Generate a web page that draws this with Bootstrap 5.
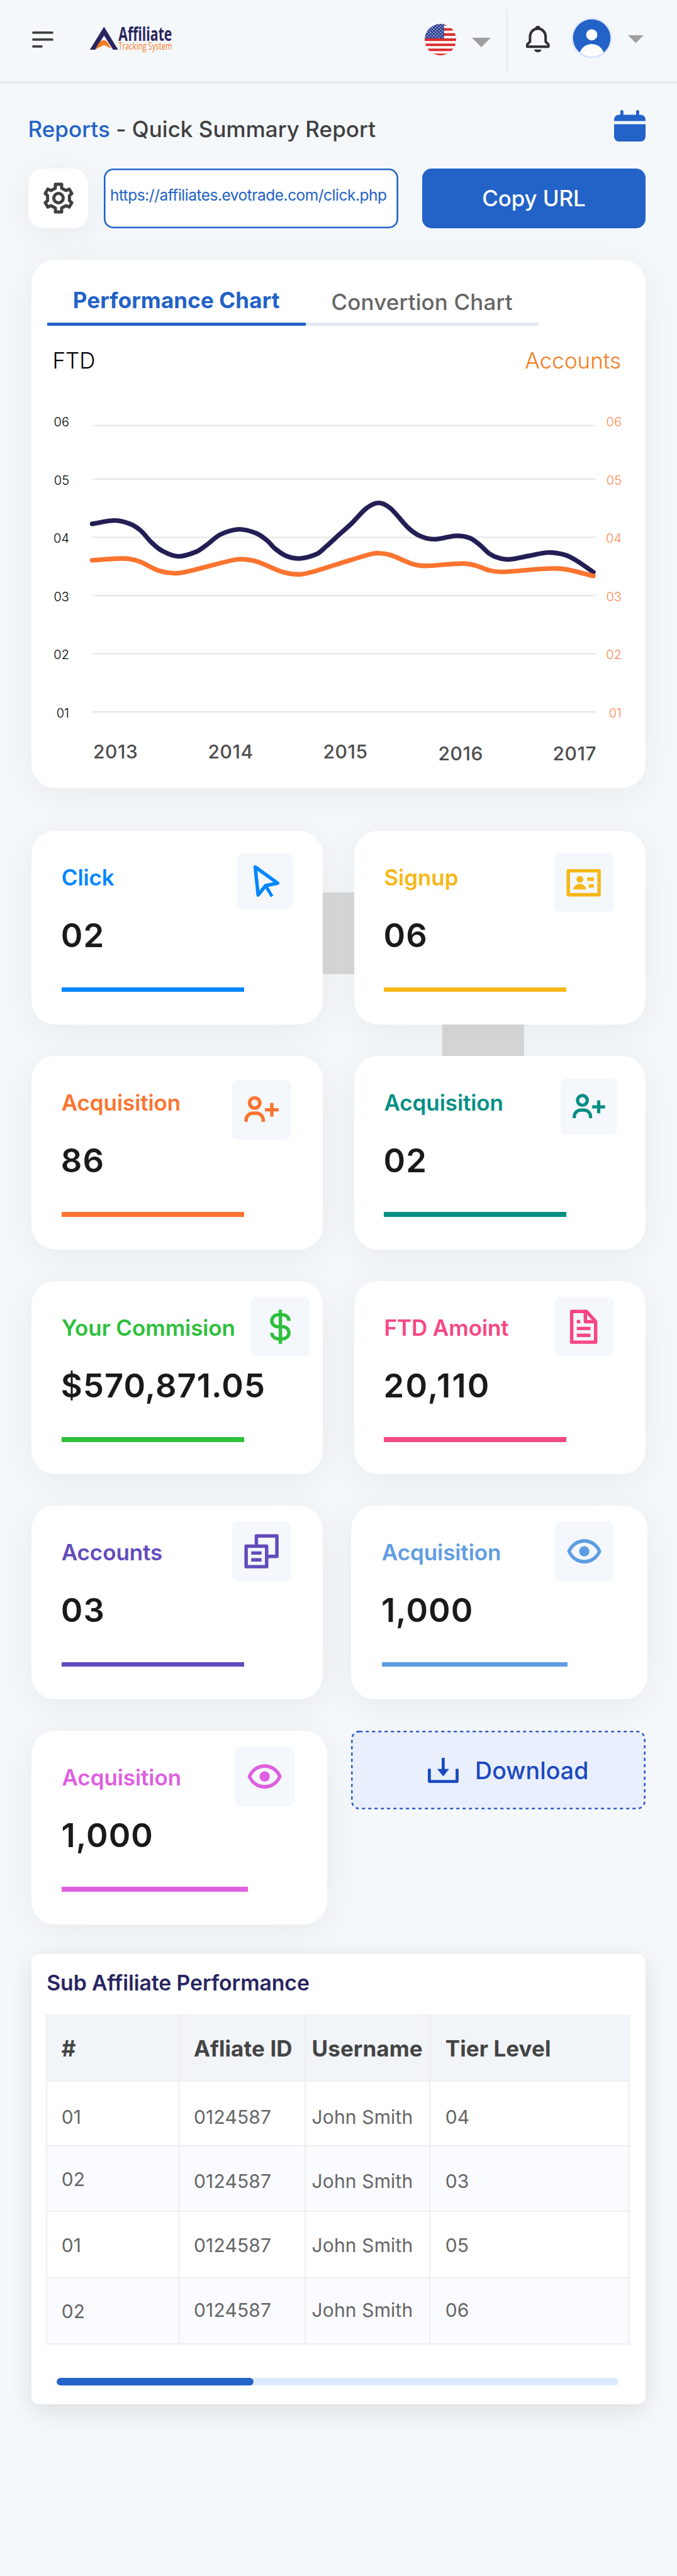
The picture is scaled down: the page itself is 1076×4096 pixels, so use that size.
<!DOCTYPE html>
<html lang="en">
<head>
<meta charset="utf-8">
<meta name="viewport" content="width=device-width, initial-scale=1">
<title>Quick Summary Report</title>
<link rel="stylesheet" href="https://cdn.jsdelivr.net/npm/bootstrap@5.3.0/dist/css/bootstrap.min.css">
<style>
  :root { --brand: #2362c7; --ink: #404040; }
  body { width: 1076px; min-height: 4096px; background: #f4f8fb; color: var(--ink); font-family: Inter, "Liberation Sans", sans-serif; font-size: 35px; line-height: 40px; overflow-x: hidden; }
  svg { display: block; flex: none; }

  .topbar { height: 130px; padding: 0 53px 5px 51px; box-shadow: 0 2.5px 0 #e6e6e6; }
  .brand-mark { margin-left: 57px; }
  .caret-lg { margin: 10px 25px 0 25px; }
  .split-line { width: 2.6px; height: 98px; background: #e6e6e6; margin: 2px 28.5px 0 0; }
  .avatar-pic { margin: -5px 25.5px 0 34px; }

  .page-head { padding: 45px 50px 0 44.5px; height: 137.7px; }
  .page-head h1 { font-size: 35px; line-height: 50px; font-weight: 500; margin: 5px 0 0; letter-spacing: .03px; }
  .page-head a { color: var(--brand); text-decoration: none; }

  .link-bar { height: 95px; padding: 0 50px 0 45px; }
  .gear-btn { width: 95px; height: 95px; border-radius: 24px; background: #fff; border: 0; padding: 0; box-shadow: 0 10px 60px rgba(0,0,0,.06); }
  .url-box { width: 467.6px; height: 95px; margin-left: 25.4px; border: 0; border-radius: 15px; background: #fff; box-shadow: inset 0 0 0 2.6px var(--brand); color: var(--brand); font-size: 24.5px; font-weight: 400; letter-spacing: -.5px; padding: 0 4px 10px 9.5px; }
  .url-box:focus { color: var(--brand); box-shadow: inset 0 0 0 2.6px var(--brand); }
  .copy-btn { width: 355.2px; height: 95px; border: 0; border-radius: 15px; background: var(--brand); color: #fff; font-size: 35px; font-weight: 500; letter-spacing: -.15px; }

  .panel { background: #fff; border: 0; border-radius: 37.5px; box-shadow: 0 10px 60px rgba(0,0,0,.06); color: inherit; }
  .chart-panel { width: 976px; height: 840.7px; margin: 50px 0 0 50px; }
  .chart-tabs { height: 105.3px; padding-left: 25px; }
  .chart-tabs .nav-link { padding: 44.8px 0 0; border-radius: 0; font-weight: 500; letter-spacing: .12px; color: #666; box-shadow: inset 0 -5px #e4e8f3; width: 370.2px; padding-top: 47.8px; }
  .chart-tabs .nav-link.active { width: 410.5px; padding-top: 44.8px; font-weight: 700; color: var(--brand); box-shadow: inset 0 -5px var(--brand); }
  .axis-names { padding: 34.8px 39px 0 33.5px; height: 122px; font-weight: 300; color: #000; }
  .axis-names .right-axis { color: #f47c20; }
  .grid-line line { stroke: #e8e8e8; stroke-width: 2.4; }
  .y-text { font-size: 20px; font-weight: 300; text-anchor: end; }
  .x-text { font-size: 30px; font-weight: 500; fill: #4d4d4d; letter-spacing: .55px; }

  .stats { padding: 68px 0 0 50px; }
  .stat-row { width: 976px; height: 307.5px; margin-bottom: 50.2px; }
  .stat { width: 463.3px; height: 307.5px; padding-left: 47.5px; z-index: 1; color: var(--tone); }
  .stat.wide { width: 470.3px; padding-left: 48.3px; }
  .stat.shift { margin: 0 -2.6px 0 0; }
  .stat-top { height: 133px; }
  .stat-name { font-size: 35px; font-weight: 600; line-height: 40px; letter-spacing: -.08px; margin: 54px 0 0; padding-left: .2px; white-space: nowrap; }
  .stat-num { font-size: 52.5px; line-height: 66px; font-weight: 600; color: #1a1a1a; letter-spacing: 1px; margin-left: -.7px; }
  .stat-line { width: 290px; height: 7.5px; background: var(--tone); margin-top: 49.3px; }
  .wide .stat-line { width: 295.5px; }
  .tile { width: 95px; height: 95px; border-radius: 10px; background: #f4f7fb; margin: var(--drop, 25px) var(--edge, 50.4px) 0 auto; flex: none; }
  .tile.sm { width: 89.5px; height: 89.5px; }
  .tile .solid { fill: var(--tone); stroke: none; }
  .tile .stroked { fill: none; stroke: var(--tone); stroke-width: 2; stroke-linejoin: round; }
  .shade { position: absolute; background: #d9d9d9; z-index: 0; }
  .shade-a { left: 500px; top: 165.4px; width: 90px; height: 130px; }
  .shade-b { left: 703.4px; top: 365px; width: 130px; height: 70px; }

  .download-btn { width: 468px; height: 125px; border: 0; border-radius: 12.5px; padding: 0 0 0 122px; color: #1b49bf; font-size: 37.5px; font-weight: 500; z-index: 1; }
  .download-btn .frame { position: absolute; inset: 0; z-index: -1; }
  .download-btn .btn-text { margin-left: 26px; padding-top: 3px; letter-spacing: .1px; }

  .table-panel { width: 976px; height: 715.7px; margin: -2.6px 0 0 50px; border-radius: 12.5px; box-shadow: 0 10px 38px rgba(0,0,0,.11); padding: 26.2px 24.8px 0 22.7px; z-index: 2; }
  .table-panel h2 { font-size: 33.75px; font-weight: 600; line-height: 40px; letter-spacing: -.08px; color: #282561; margin: 0; padding: 0 0 0 1.5px; height: 69.2px; }
  .tiers { width: 928.5px; table-layout: fixed; border-collapse: collapse; margin: 0; color: #666; font-size: 30px; line-height: 30px; }
  .tiers > :not(caption) > * > * { padding: 0 0 0 23px; border: 2px solid #efefef; vertical-align: top; color: inherit; background: transparent; box-shadow: none; white-space: nowrap; }
  .tiers > thead > tr { height: 106px; background: #f1f4f8; color: #444; }
  .tiers > thead > tr > th { font-size: 35px; font-weight: 700; line-height: 40px; padding-top: 34.5px; border-top: 0; letter-spacing: .1px; }
  .tiers > tbody { letter-spacing: .15px; }
  .tiers > tbody > tr:nth-child(even) { background: #fafbff; }
  .tiers > * > tr > :nth-child(2) { padding-left: 22px; }
  .tiers > * > tr > :nth-child(3) { padding-left: 9.5px; }
  .tiers > * > tr > :nth-child(4) { padding-left: 24px; }
  .tiers > tbody > tr:nth-child(1) { height: 103px; } .tiers > tbody > tr:nth-child(1) > td { padding-top: 41px; }
  .tiers > tbody > tr:nth-child(2) { height: 104.7px; } .tiers > tbody > tr:nth-child(2) > td { padding-top: 40px; }
  .tiers > tbody > tr:nth-child(3) { height: 105.3px; } .tiers > tbody > tr:nth-child(3) > td { padding-top: 38px; }
  .tiers > tbody > tr:nth-child(4) { height: 105.5px; } .tiers > tbody > tr:nth-child(4) > td { padding-top: 35px; }
  .tiers > tbody > tr:nth-child(2) > td:first-child { padding-top: 37.5px; }
  .tiers > tbody > tr:nth-child(4) > td:first-child { padding-top: 37.5px; }
  .scroll-track { width: 893.3px; height: 12.5px; border-radius: 6.25px; background: #dde9fd; margin: 52.5px 0 0 17.3px; }
  .scroll-track .progress-bar { background: var(--brand); border-radius: 6.25px; }
</style>
<script src="https://cdn.jsdelivr.net/npm/bootstrap@5.3.0/dist/js/bootstrap.bundle.min.js"></script>
</head>
<body>

<header class="topbar d-flex align-items-center">
  <svg width="34" height="26" viewBox="0 0 34 26" fill="none" stroke="#404040" stroke-width="3.75" stroke-linecap="round"><path d="M1.9 1.9h30M1.9 12.9h30M1.9 23.9h13"/></svg>
  <svg class="brand-mark" width="133.5" height="62.8" viewBox="500 0 640 301">
    <path fill="#2a2560" d="M612 55L719 230H681L612 122L545 230H504z"/>
    <path fill="#f47c20" d="M545 229L578 173Q596 158 612 157Q628 160 634 168L667 222L612 194z"/>
    <text x="722" y="162" font-family="Open Sans" font-weight="700" font-size="147" fill="#2a2560" textLength="408" lengthAdjust="spacingAndGlyphs">Affiliate</text>
    <text x="722" y="230" font-family="Open Sans" font-weight="400" font-size="74" fill="#f47c20" textLength="408" lengthAdjust="spacingAndGlyphs">Tracking System</text>
  </svg>
  <div class="d-flex align-items-center ms-auto">
    <svg width="50" height="50" viewBox="0 0 50 50">
      <defs>
        <clipPath id="flagClip"><circle cx="25" cy="25" r="25"/></clipPath>
        <pattern id="starGrid" width="5.3" height="5" patternUnits="userSpaceOnUse"><circle cx="1.4" cy="1" r=".85" fill="#fff"/><circle cx="4" cy="3.5" r=".85" fill="#fff"/></pattern>
      </defs>
      <g clip-path="url(#flagClip)">
        <path fill="#fff" d="M0 0h50v50H0z"/>
        <path stroke="#dc2d2f" stroke-width="4.1" d="M0 .5h50M0 8.7h50M0 16.9h50M0 25.1h50M0 33.2h50M0 41.3h50M0 49.4h50"/>
        <path fill="#2f4496" d="M0 0h30.7v23.1H0z"/><path fill="url(#starGrid)" d="M0 0h30v22.5H0z"/>
      </g>
    </svg>
    <svg class="caret-lg" width="30" height="15" viewBox="0 0 30 15"><path fill="#9f9f9f" d="M0 0h30L15 15z"/></svg>
    <div class="split-line"></div>
    <svg width="37.6" height="42.1" viewBox="0 0 37.6 42.1">
      <path fill="none" stroke="#2e3035" stroke-width="4" stroke-linejoin="round" d="M2 33.3V29.6L6.4 25.3V17A12.4 12.4 0 0 1 31.2 17V25.3L35.6 29.6V33.3z"/>
      <path fill="#2e3035" d="M14.6 4a4.2 4 0 0 1 8.4 0zM13 37.8h11.6a5.8 4.3 0 0 1-11.6 0z"/>
    </svg>
    <svg class="avatar-pic" width="65" height="65" viewBox="0 0 65 65">
      <clipPath id="avatarClip"><circle cx="32.5" cy="32.5" r="29.8"/></clipPath>
      <circle cx="32.5" cy="32.5" r="32.5" fill="#e0e9ff"/><circle cx="32.5" cy="32.5" r="29.8" fill="#2362c7"/>
      <g clip-path="url(#avatarClip)" fill="#fff"><ellipse cx="32.5" cy="27.3" rx="8.9" ry="8.9"/><circle cx="32.5" cy="62" r="20"/></g>
    </svg>
    <svg width="25" height="12.5" viewBox="0 0 25 12.5"><path fill="#9f9f9f" d="M0 0h25L12.5 12.5z"/></svg>
  </div>
</header>

<section class="page-head d-flex justify-content-between align-items-start">
  <h1><a href="#">Reports</a> - Quick Summary Report</h1>
  <svg width="50" height="50" viewBox="0 0 50 50" fill="#2362c7"><path d="M9.9 8V2.4a2.45 2.45 0 0 1 4.9 0V7.5H35V2.4a2.45 2.45 0 0 1 4.9 0V7.5h2.6A7.5 7.5 0 0 1 50 15v2.5H0V15a7.5 7.5 0 0 1 7.5-7.5h2.4zM0 22.5h50v20a7.5 7.5 0 0 1-7.5 7.5h-35A7.5 7.5 0 0 1 0 42.5z"/></svg>
</section>

<section class="link-bar d-flex">
  <button class="gear-btn btn d-flex align-items-center justify-content-center" type="button" aria-label="Settings">
    <svg width="52" height="52" viewBox="-26 -26 52 52" fill="none" stroke="#404040" stroke-width="5" stroke-linejoin="round"><path d="M-5-22.1H5V-15.8L12-12L17-14.3L21.2-7.3L17.4-4V4L21.2 7.3L17 14.3L12 12L5 15.8V22.1H-5V15.8L-12 12L-17 14.3L-21.2 7.3L-17.4 4V-4L-21.2-7.3L-17-14.3L-12-12L-5-15.8z"/><circle r="7.5"/></svg>
  </button>
  <input class="url-box form-control" type="text" value="https://affiliates.evotrade.com/click.php" readonly aria-label="Tracking link">
  <button class="copy-btn btn p-0 ms-auto" type="button">Copy URL</button>
</section>

<section class="panel chart-panel card">
  <ul class="nav chart-tabs">
    <li class="nav-item d-flex"><a class="nav-link active text-center" href="#">Performance Chart</a></li>
    <li class="nav-item d-flex"><a class="nav-link text-center" href="#">Convertion Chart</a></li>
  </ul>
  <div class="axis-names d-flex justify-content-between"><span>FTD</span><span class="right-axis">Accounts</span></div>
  <svg width="976" height="600" viewBox="50 640 976 600">
    <g class="grid-line">
      <line x1="147.5" x2="946" y1="676.7" y2="676.7"/><line x1="147.5" x2="946" y1="761.8" y2="761.8"/><line x1="147.5" x2="946" y1="854.5" y2="854.5"/><line x1="147.5" x2="946" y1="947" y2="947"/><line x1="147.5" x2="946" y1="1039.4" y2="1039.4"/><line x1="147.5" x2="946" y1="1132" y2="1132"/>
    </g>
    <g class="y-text" fill="#000">
      <text x="110" y="678">06</text><text x="110" y="770.7">05</text><text x="110" y="863.2">04</text><text x="110" y="955.9">03</text><text x="110" y="1048.3">02</text><text x="110" y="1140.7">01</text>
    </g>
    <g class="y-text" fill="#fc8c56">
      <text x="988" y="678">06</text><text x="988" y="770.7">05</text><text x="988" y="863.2">04</text><text x="988" y="955.9">03</text><text x="988" y="1048.3">02</text><text x="988" y="1140.7">01</text>
    </g>
    <g class="x-text">
      <text x="148" y="1206">2013</text><text x="330.5" y="1206">2014</text><text x="513.5" y="1206">2015</text><text x="696.5" y="1208.8">2016</text><text x="878.5" y="1208.8">2017</text>
    </g>
    <g fill="none" stroke-width="7.4" stroke-linecap="round" id="series"></g>
  </svg>
</section>

<section class="stats position-relative">
  <div class="shade shade-a"></div>
  <div class="shade shade-b"></div>

  <div class="stat-row d-flex justify-content-between">
    <article class="panel stat card" style="--tone:#0086ff">
      <div class="stat-top d-flex align-items-start"><h3 class="stat-name">Click</h3>
        <div class="tile sm" style="--drop:35.4px;--edge:48.3px"><svg width="89.5" height="89.5" viewBox="0 0 89.5 89.5"><path class="stroked" style="stroke-width:5.5" d="M29.6 21.6L65.2 47.3L46.1 51.2L34.3 66z"/><path class="stroked" style="stroke-width:5" d="M46.3 51.5L56.3 68.3"/></svg></div></div>
      <div class="stat-num">02</div><div class="stat-line"></div>
    </article>
    <article class="panel stat card" style="--tone:#f6b818">
      <div class="stat-top d-flex align-items-start"><h3 class="stat-name">Signup</h3>
        <div class="tile d-flex align-items-center justify-content-center" style="--drop:35.1px"><svg width="65.3" height="65.3" viewBox="0 0 24 24"><rect class="stroked" x="3" y="5" width="18" height="14"/><path class="solid" d="M6 15.9a3.75 3.3 0 0 1 7.5 0zM14.1 8.9H18v2h-3.9zM15 12.9h3v2h-3z"/><circle class="solid" cx="9.8" cy="10" r="2"/></svg></div></div>
      <div class="stat-num">06</div><div class="stat-line"></div>
    </article>
  </div>

  <div class="stat-row d-flex justify-content-between">
    <article class="panel stat card" style="--tone:#fb7430">
      <div class="stat-top d-flex align-items-start"><h3 class="stat-name">Acquisition</h3>
        <div class="tile d-flex align-items-center justify-content-center" style="--drop:37.8px"><svg width="65.3" height="65.3" viewBox="0 0 24 24"><circle class="stroked" cx="8" cy="8" r="3"/><path class="stroked" d="M3 19v-1a4 4 0 0 1 4-4h2a4 4 0 0 1 4 4v1M14 12h8M18 8v8"/></svg></div></div>
      <div class="stat-num">86</div><div class="stat-line"></div>
    </article>
    <article class="panel stat card" style="--tone:#048f86">
      <div class="stat-top d-flex align-items-start"><h3 class="stat-name">Acquisition</h3>
        <div class="tile sm d-flex align-items-center justify-content-center" style="--drop:36.4px;--edge:45.3px"><svg width="62" height="62" viewBox="0 0 24 24"><circle class="stroked" cx="8" cy="8" r="3"/><path class="stroked" d="M3 19v-1a4 4 0 0 1 4-4h2a4 4 0 0 1 4 4v1M14 12h8M18 8v8"/></svg></div></div>
      <div class="stat-num">02</div><div class="stat-line"></div>
    </article>
  </div>

  <div class="stat-row d-flex justify-content-between">
    <article class="panel stat card" style="--tone:#2dc03c">
      <div class="stat-top d-flex align-items-start"><h3 class="stat-name">Your Commision</h3>
        <div class="tile d-flex align-items-center justify-content-center" style="--edge:20.6px"><svg width="65.3" height="65.3" viewBox="0 0 24 24"><path class="stroked" d="M12 2v20M17 8.5A3.5 3.5 0 0 0 13.5 5h-3a3.5 3.5 0 0 0 0 7h3a3.5 3.5 0 0 1 0 7h-3A3.5 3.5 0 0 1 7 15.5"/></svg></div></div>
      <div class="stat-num">$570,871.05</div><div class="stat-line"></div>
    </article>
    <article class="panel stat card" style="--tone:#f54784">
      <div class="stat-top d-flex align-items-start"><h3 class="stat-name">FTD Amoint</h3>
        <div class="tile d-flex align-items-center justify-content-center"><svg width="65.3" height="65.3" viewBox="0 0 24 24"><path class="stroked" d="M5 3h8.6L19 8.9V21H5zM13 3v6h6"/><path class="solid" d="M8 8h2v2H8zM8 12h8v2H8zM8 16h8v2H8z"/></svg></div></div>
      <div class="stat-num" style="letter-spacing:2.2px">20,110</div><div class="stat-line"></div>
    </article>
  </div>

  <div class="stat-row d-flex justify-content-between">
    <article class="panel stat card" style="--tone:#624bbb">
      <div class="stat-top d-flex align-items-start"><h3 class="stat-name">Accounts</h3>
        <div class="tile d-flex align-items-center justify-content-center"><svg width="65.3" height="65.3" viewBox="0 0 24 24"><path class="stroked" d="M3 9h12v12H3zM9 9V3h12v12h-6"/><path class="solid" d="M6 12h6v2H6zM6 16h6v2H6z"/></svg></div></div>
      <div class="stat-num">03</div><div class="stat-line"></div>
    </article>
    <article class="panel stat wide shift card" style="--tone:#5f9de1">
      <div class="stat-top d-flex align-items-start"><h3 class="stat-name">Acquisition</h3>
        <div class="tile d-flex align-items-center justify-content-center" style="--edge:52.8px"><svg width="65.3" height="65.3" viewBox="0 0 24 24"><path class="solid" fill-rule="evenodd" d="M2 12C3.7 7.8 7.5 4.9 12 4.9s8.3 2.9 10 7.1c-1.7 4.2-5.5 7.1-10 7.1S3.7 16.2 2 12zM4.2 12c1.4 3 4.4 5 7.8 5s6.4-2 7.8-5C18.4 9 15.4 7 12 7S5.6 9 4.2 12z"/><circle class="solid" cx="12" cy="12" r="3"/></svg></div></div>
      <div class="stat-num">1,000</div><div class="stat-line"></div>
    </article>
  </div>

  <div class="stat-row d-flex justify-content-between">
    <article class="panel stat wide card" style="--tone:#de5fe0">
      <div class="stat-top d-flex align-items-start"><h3 class="stat-name">Acquisition</h3>
        <div class="tile d-flex align-items-center justify-content-center" style="--edge:52.4px"><svg width="65.3" height="65.3" viewBox="0 0 24 24"><path class="solid" fill-rule="evenodd" d="M2 12C3.7 7.8 7.5 4.9 12 4.9s8.3 2.9 10 7.1c-1.7 4.2-5.5 7.1-10 7.1S3.7 16.2 2 12zM4.2 12c1.4 3 4.4 5 7.8 5s6.4-2 7.8-5C18.4 9 15.4 7 12 7S5.6 9 4.2 12z"/><circle class="solid" cx="12" cy="12" r="3"/></svg></div></div>
      <div class="stat-num">1,000</div><div class="stat-line"></div>
    </article>
    <button class="download-btn btn position-relative d-flex align-items-center" type="button">
      <svg class="frame" width="468" height="125" viewBox="0 0 468 125"><rect x="1.25" y="1.25" width="465.5" height="122.5" rx="12" fill="#e9effd" stroke="#2f5ac5" stroke-width="2.6" stroke-dasharray="5 5"/></svg>
      <svg width="49" height="40" viewBox="0 0 49 40"><path fill="none" stroke="#1b49bf" stroke-width="4.8" stroke-linejoin="round" d="M2.4 17.5V37.6H46.5V17.5M24.4 0V20"/><path fill="#1b49bf" d="M14.9 17.8h19L24.4 29.5z"/></svg>
      <span class="btn-text">Download</span>
    </button>
  </div>
</section>

<section class="panel table-panel card">
  <h2>Sub Affiliate Performance</h2>
  <table class="table tiers">
    <colgroup><col style="width:211.3px"><col style="width:200px"><col style="width:197.7px"><col></colgroup>
    <thead><tr><th>#</th><th>Afliate ID</th><th>Username</th><th>Tier Level</th></tr></thead>
    <tbody>
      <tr><td>01</td><td>0124587</td><td>John Smith</td><td>04</td></tr>
      <tr><td>02</td><td>0124587</td><td>John Smith</td><td>03</td></tr>
      <tr><td>01</td><td>0124587</td><td>John Smith</td><td>05</td></tr>
      <tr><td>02</td><td>0124587</td><td>John Smith</td><td>06</td></tr>
    </tbody>
  </table>
  <div class="scroll-track progress"><div class="progress-bar" style="width:35%"></div></div>
</section>

<script>
  // Smooth each series with a Catmull-Rom spline written out as cubic segments.
  const series = [
    ['#231f55', [[146.5,833],[182,827.6],[206,832.8],[223.5,843.5],[240,861.7],[257,875.5],[283,884.6],[312,877.2],[329,866],[350,850],[380,841.6],[408,848.2],[424,859],[438,873],[455,884],[477,888],[504,880.7],[518,869.3],[538,851],[558.6,832.5],[582.6,808],[601.5,799.6],[620.3,808],[647.8,838.2],[666.7,851.8],[690.7,857.4],[725,852],[747.3,855.7],[762.7,866.5],[778,880.5],[792,887],[809,889.5],[840,884],[870.8,878.6],[898,882.4],[915.4,890.9],[943,909.8]]],
    ['#fb7430', [[146.5,890.9],[195.6,888],[219.6,892],[250.5,906.7],[278,911.6],[298.5,908.6],[370.5,890.5],[386,889.2],[408.3,893],[449.5,909.5],[475,913.3],[494,910],[538,896.5],[589.5,881],[601.5,879.6],[620.3,882.4],[654.7,896.5],[675,899.8],[737,896],[757.6,899.7],[778,907],[798.8,909.3],[888,904],[943,915.8]]]
  ];
  document.getElementById('series').innerHTML = series.map(([c, p]) => {
    let d = `M${p[0]}`;
    for (let i = 0; i < p.length - 1; i++) {
      const a = p[i - 1] || p[i], b = p[i], e = p[i + 1], f = p[i + 2] || e, w = e[0] - b[0];
      const m1 = (e[1] - a[1]) / (e[0] - a[0]), m2 = (f[1] - b[1]) / (f[0] - b[0]);
      d += `C${b[0] + w / 3} ${b[1] + m1 * w / 3} ${e[0] - w / 3} ${e[1] - m2 * w / 3} ${e}`;
    }
    return `<path stroke="${c}" d="${d}"/>`;
  }).join('');
</script>
</body>
</html>
